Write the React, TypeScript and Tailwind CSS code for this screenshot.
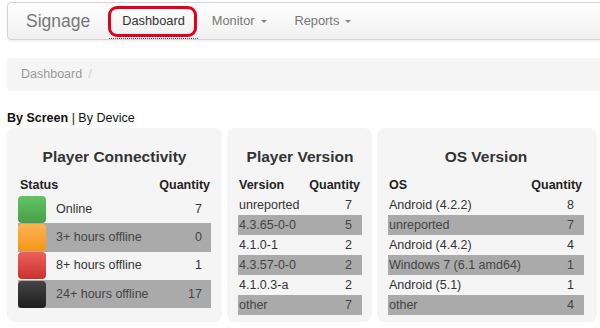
const connectivity = [
  { label: "Online", qty: 7, color: "from-[#62c462] to-[#48a048]" },
  { label: "3+ hours offline", qty: 0, color: "from-[#fbb450] to-[#f89406]" },
  { label: "8+ hours offline", qty: 1, color: "from-[#ee5f5b] to-[#c9302c]" },
  { label: "24+ hours offline", qty: 17, color: "from-[#444444] to-[#1f1f1f]" },
];

const versions = [
  ["unreported", 7],
  ["4.3.65-0-0", 5],
  ["4.1.0-1", 2],
  ["4.3.57-0-0", 2],
  ["4.1.0.3-a", 2],
  ["other", 7],
] as const;

const osVersions = [
  ["Android (4.2.2)", 8],
  ["unreported", 7],
  ["Android (4.4.2)", 4],
  ["Windows 7 (6.1 amd64)", 1],
  ["Android (5.1)", 1],
  ["other", 4],
] as const;

function Caret() {
  return <span className="ml-[6px] inline-block h-0 w-0 border-x-[3px] border-t-[3px] border-x-transparent border-t-[#888] align-middle" />;
}

function CardTitle({ children }: { children: React.ReactNode }) {
  return <div className="h-[20px] text-center text-[15.5px] font-bold leading-[20px] text-[#333]">{children}</div>;
}

function SimpleTable({ first, rows }: { first: string; rows: readonly (readonly [string, number])[] }) {
  return (
    <div className="mt-[8px]">
      <div className="flex h-[20px] items-center justify-between pl-[1px] pr-[2px] text-[12.5px] font-bold text-[#222]">
        <span>{first}</span>
        <span>Quantity</span>
      </div>
      {rows.map(([name, qty], i) => (
        <div
          key={name + i}
          className={`flex h-[20px] items-center justify-between pl-[1px] pr-[10px] text-[12.5px] ${i % 2 === 1 ? "bg-[#aaaaaa] text-[#444]" : "text-[#333]"}`}
        >
          <span>{name}</span>
          <span>{qty}</span>
        </div>
      ))}
    </div>
  );
}

export default function App() {
  return (
    <div className="h-[328px] w-[600px] overflow-hidden bg-white pt-[2px] font-['Liberation_Sans',Arial,sans-serif]">
      <div className="relative ml-[7px] flex h-[38px] w-[610px] items-stretch rounded-l-[4px] border border-[#d4d4d4] bg-linear-to-b from-white to-[#f0f0f0] shadow-[0_1px_3px_rgba(0,0,0,0.08)]">
        <div className="flex items-center pl-[18px] pr-[19px] text-[17.5px] text-[#777]">Signage</div>
        <div className="flex items-center border-b border-dotted border-[#555] px-[13px] text-[12.8px] text-[#333]">Dashboard</div>
        <div className="flex items-center px-[14px] text-[12.8px] text-[#777]">
          Monitor
          <Caret />
        </div>
        <div className="flex items-center px-[14px] text-[12.8px] text-[#777]">
          Reports
          <Caret />
        </div>
        <div className="absolute left-[100px] top-[3px] h-[31px] w-[89px] rounded-[9px] border-[3px] border-[#e3001b]" />
      </div>

      <div className="ml-[7px] mt-[18px] flex h-[33px] w-[610px] items-center rounded-[4px] bg-[#f5f5f5] pl-[14px] text-[12.5px] text-[#999]">
        Dashboard<span className="ml-[6px] text-[#ccc]">/</span>
      </div>

      <div className="ml-[7px] mt-[19px] h-[16px] text-[12.5px] leading-[16px] text-[#111]">
        <span className="font-bold">By Screen</span> | By Device
      </div>

      <div className="ml-[7px] mt-[2px] grid h-[194px] grid-cols-[215px_145px_220px] gap-[5px]">
        <div className="rounded-[8px] bg-[#f5f5f5] px-[11px] pt-[19px]">
          <CardTitle>Player Connectivity</CardTitle>
          <div className="mt-[8px]">
            <div className="flex h-[20px] items-center justify-between pl-[2px] pr-[1px] text-[12.5px] font-bold text-[#222]">
              <span>Status</span>
              <span>Quantity</span>
            </div>
            {connectivity.map((row, i) => (
              <div
                key={row.label}
                className={`flex h-[28.3px] items-center text-[12.5px] ${i % 2 === 1 ? "bg-[#aaaaaa] text-[#444]" : "text-[#333]"}`}
              >
                <div className={`h-[27px] w-[28px] rounded-[4px] bg-linear-to-b ${row.color}`} />
                <span className="flex-1 pl-[10px]">{row.label}</span>
                <span className="pr-[9px]">{row.qty}</span>
              </div>
            ))}
          </div>
        </div>

        <div className="rounded-[8px] bg-[#f5f5f5] pl-[11px] pr-[10px] pt-[19px]">
          <CardTitle>Player Version</CardTitle>
          <SimpleTable first="Version" rows={versions} />
        </div>

        <div className="rounded-[8px] bg-[#f5f5f5] pl-[11px] pr-[13px] pt-[19px]">
          <CardTitle>OS Version</CardTitle>
          <SimpleTable first="OS" rows={osVersions} />
        </div>
      </div>
    </div>
  );
}
